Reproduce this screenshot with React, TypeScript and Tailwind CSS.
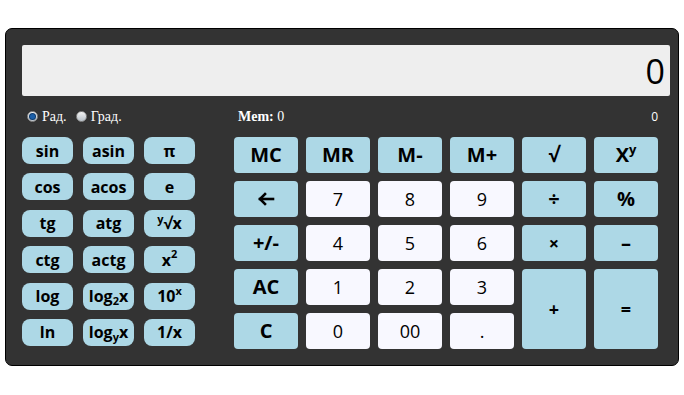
import React from "react";

const L = "h-[27px] rounded-[8px] bg-[#add8e6] flex items-center justify-center text-[16px] font-bold text-black leading-none";
const B = "rounded-[4px] bg-[#add8e6] flex items-center justify-center text-[20px] font-bold text-black leading-none";
const N = "rounded-[4px] bg-[#f8f8ff] flex items-center justify-center text-[18px] text-black leading-none";

function Radio({ checked }: { checked?: boolean }) {
  return (
    <span className="inline-flex w-[11px] h-[11px] rounded-full border border-[#8a8a8a] bg-gradient-to-b from-[#f4f4f4] to-[#b9c2c9] items-center justify-center">
      {checked && <span className="w-[5px] h-[5px] rounded-full bg-[#1c5fa8] shadow-[0_0_0_1px_#0d3b6e]" />}
    </span>
  );
}

export default function App() {
  return (
    <div className="w-[684px] h-[395px] bg-white pt-[28px] pl-[5px]" style={{ fontFamily: '"Open Sans", sans-serif' }}>
      <div className="w-[674px] h-[338px] bg-[#333333] border border-black rounded-[7px] pt-[16px] pl-[16px] pr-[7px]">
        <div className="h-[51px] w-[648px] bg-[#eeeeee] rounded-[2px] flex items-center justify-end pr-[5px] text-[34px] text-black leading-none">
          0
        </div>
        <div className="flex">
          <div className="w-[173px]">
            <div className="h-[41px] flex items-center pl-[5px] text-white text-[14px]" style={{ fontFamily: '"Liberation Serif", serif' }}>
              <Radio checked />
              <span className="ml-[4px]">Рад.</span>
              <span className="ml-[9px] inline-flex"><Radio /></span>
              <span className="ml-[4px]">Град.</span>
            </div>
            <div className="grid grid-cols-3 gap-x-[10px] gap-y-[9.4px]">
              <div className={L}>sin</div>
              <div className={L}>asin</div>
              <div className={L}>π</div>
              <div className={L}>cos</div>
              <div className={L}>acos</div>
              <div className={L}>e</div>
              <div className={L}>tg</div>
              <div className={L}>atg</div>
              <div className={L}><span className="text-[11px] -translate-y-[5px]">y</span><span>√x</span></div>
              <div className={L}>ctg</div>
              <div className={L}>actg</div>
              <div className={L}><span>x</span><span className="text-[11px] -translate-y-[6px]">2</span></div>
              <div className={L}>log</div>
              <div className={L}><span>log</span><span className="text-[11px] translate-y-[4px]">2</span><span>x</span></div>
              <div className={L}><span>10</span><span className="text-[11px] -translate-y-[6px]">x</span></div>
              <div className={L}>ln</div>
              <div className={L}><span>log</span><span className="text-[11px] translate-y-[4px]">y</span><span>x</span></div>
              <div className={L}>1/x</div>
            </div>
          </div>
          <div className="w-[424px] ml-[39px]">
            <div className="h-[41px] flex items-center justify-between pl-[4px] pr-[0px] text-white text-[14px]" style={{ fontFamily: '"Liberation Serif", serif' }}>
              <span><b>Mem:</b> 0</span>
              <span style={{ fontFamily: '"Open Sans", sans-serif' }} className="text-[12px]">0</span>
            </div>
            <div className="grid grid-cols-6 grid-rows-[36px_36px_36px_36px_36px] gap-[8px]">
              <div className={B}>MC</div>
              <div className={B}>MR</div>
              <div className={B}>M-</div>
              <div className={B}>M+</div>
              <div className={B}>√</div>
              <div className={B}><span>X</span><span className="text-[13px] -translate-y-[6px]">y</span></div>
              <div className={B}>
                <svg width="18" height="14" viewBox="0 0 18 14" fill="none" stroke="black" strokeWidth="2.6" strokeLinecap="square">
                  <path d="M3 7 H16" />
                  <path d="M8 2 L3 7 L8 12" />
                </svg>
              </div>
              <div className={N}>7</div>
              <div className={N}>8</div>
              <div className={N}>9</div>
              <div className={B}>÷</div>
              <div className={B}>%</div>
              <div className={B}>+/-</div>
              <div className={N}>4</div>
              <div className={N}>5</div>
              <div className={N}>6</div>
              <div className={B + " !text-[18px]"}>×</div>
              <div className={B}>–</div>
              <div className={B}>AC</div>
              <div className={N}>1</div>
              <div className={N}>2</div>
              <div className={N}>3</div>
              <div className={B + " row-span-2 !text-[18px]"}>+</div>
              <div className={B + " row-span-2 !text-[18px]"}>=</div>
              <div className={B}>C</div>
              <div className={N}>0</div>
              <div className={N}>00</div>
              <div className={N}>.</div>
            </div>
          </div>
        </div>
      </div>
    </div>
  );
}
